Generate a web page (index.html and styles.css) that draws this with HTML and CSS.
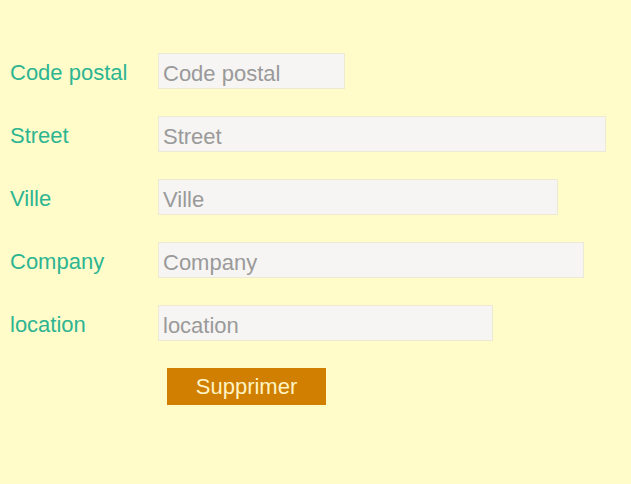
FILE: index.html
```html
<!DOCTYPE html>
<html lang="fr">
<head>
<meta charset="utf-8">
<link rel="stylesheet" href="styles.css">
</head>
<body>
<form class="form">
  <label class="label" for="cp">Code postal</label>
  <input class="field w-cp" id="cp" placeholder="Code postal">
  <label class="label" for="street">Street</label>
  <input class="field w-street" id="street" placeholder="Street">
  <label class="label" for="ville">Ville</label>
  <input class="field w-ville" id="ville" placeholder="Ville">
  <label class="label" for="company">Company</label>
  <input class="field w-company" id="company" placeholder="Company">
  <label class="label" for="location">location</label>
  <input class="field w-location" id="location" placeholder="location">
  <span></span>
  <button type="button" class="btn">Supprimer</button>
</form>
</body>
</html>
```
FILE: styles.css
```css
html, body {
  margin: 0;
  padding: 0;
  background: #fffcca;
  height: 100%;
}
body {
  font-family: "Liberation Sans", Arial, sans-serif;
}
.form {
  display: grid;
  grid-template-columns: 148px 1fr;
  grid-auto-rows: 36px;
  row-gap: 27px;
  padding: 53px 0 0 10px;
}
.label {
  box-sizing: border-box;
  display: flex;
  align-items: center;
  color: #2db592;
  font-size: 22px;
  padding-top: 4px;
}
.field {
  box-sizing: border-box;
  height: 36px;
  border: 1px solid #ece9d4;
  background: #f6f5f3;
  font-family: "Liberation Sans", Arial, sans-serif;
  font-size: 22px;
  padding: 5px 4px 0;
  color: #555;
  outline: none;
}
.field::placeholder {
  color: #9a9a9a;
}
.w-cp { width: 187px; }
.w-street { width: 448px; }
.w-ville { width: 400px; }
.w-company { width: 426px; }
.w-location { width: 335px; }
.btn {
  justify-self: start;
  margin-left: 9px;
  width: 159px;
  height: 37px;
  border: none;
  background: #d07f00;
  color: #fff3c4;
  font-family: "Liberation Sans", Arial, sans-serif;
  font-size: 22px;
  padding: 0;
}
```
